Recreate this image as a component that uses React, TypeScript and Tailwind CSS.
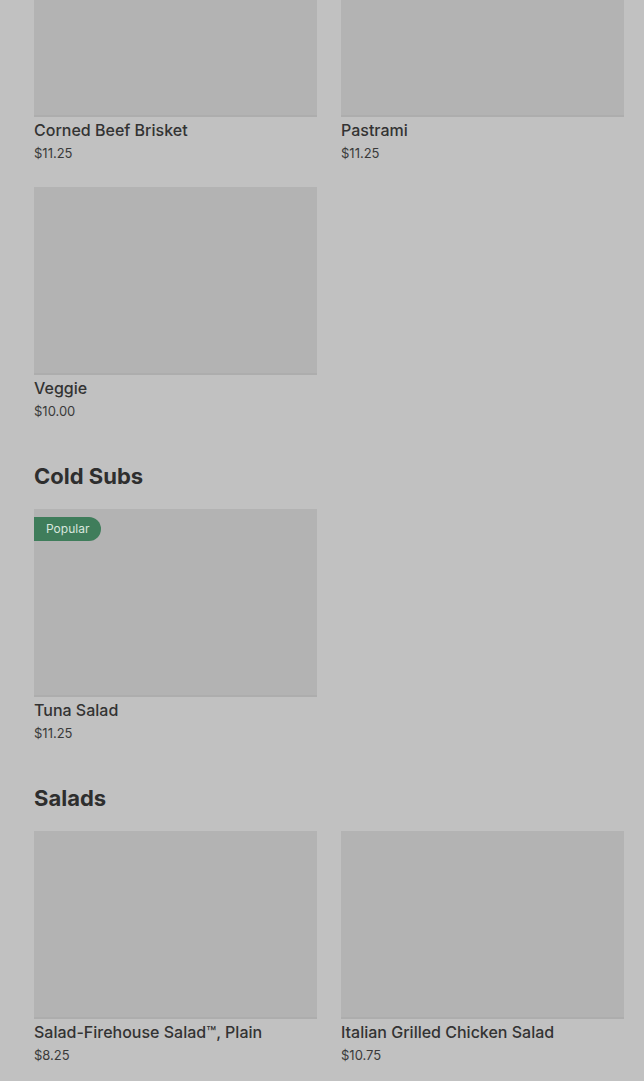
type Item = { name: string; price: string; popular?: boolean };

const sections: { title?: string; items: Item[] }[] = [
  {
    items: [
      { name: 'Corned Beef Brisket', price: '$11.25' },
      { name: 'Pastrami', price: '$11.25' },
      { name: 'Veggie', price: '$10.00' },
    ],
  },
  {
    title: 'Cold Subs',
    items: [{ name: 'Tuna Salad', price: '$11.25', popular: true }],
  },
  {
    title: 'Salads',
    items: [
      { name: 'Salad-Firehouse Salad™, Plain', price: '$8.25' },
      { name: 'Italian Grilled Chicken Salad', price: '$10.75' },
    ],
  },
];

function MenuCard({ item }: { item: Item }) {
  return (
    <div className="flex flex-col">
      <div className="relative h-[188px] bg-[#b3b3b3] border-b-2 border-[#adadad]">
        {item.popular && (
          <span className="absolute left-0 top-2 h-6 pl-3 pr-3 flex items-center rounded-r-full bg-[#3f7d5b] text-[12px] text-[#d9e6de]">
            Popular
          </span>
        )}
      </div>
      <div className="mt-[1px] text-[16px] leading-6 font-medium text-[#333333]">{item.name}</div>
      <div className="text-[13px] leading-[22px] text-[#3a3a3a]">{item.price}</div>
    </div>
  );
}

export default function App() {
  return (
    <div
      className="min-h-screen bg-[#c1c1c1] overflow-hidden"
      style={{ fontFamily: 'Inter, "Noto Sans", sans-serif' }}
    >
      <div className="-mt-[71px] pl-[34px] pr-[20px] pb-10 flex flex-col">
        {sections.map((s, i) => (
          <section key={i} className={i > 0 ? 'mt-[40px]' : ''}>
            {s.title && (
              <h2 className="text-[22px] leading-7 font-bold text-[#2e2e2e] mb-[19px]">
                {s.title}
              </h2>
            )}
            <div className="grid grid-cols-2 gap-x-6 gap-y-[23px]">
              {s.items.map((it) => (
                <MenuCard key={it.name} item={it} />
              ))}
            </div>
          </section>
        ))}
      </div>
    </div>
  );
}
